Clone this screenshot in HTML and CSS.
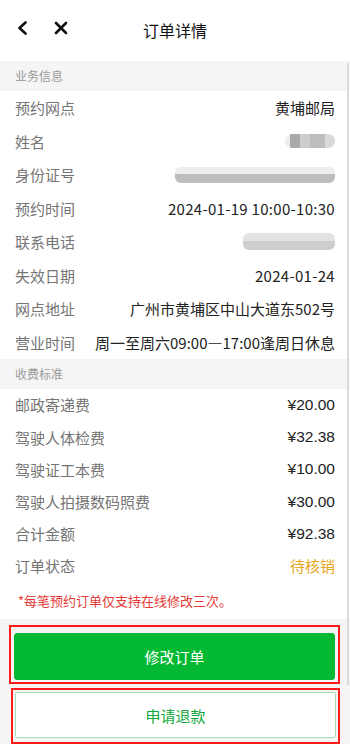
FILE: index.html
```html
<!DOCTYPE html>
<html lang="zh">
<head>
<meta charset="utf-8">
<title>订单详情</title>
<link rel="stylesheet" href="styles.css">
</head>
<body>
<div class="page">
  <header class="nav">
    <div class="nav-icons">
      <svg class="icon" width="14" height="14" viewBox="0 0 14 14"><path d="M9.5 1.5 L3.5 7 L9.5 12.5" fill="none" stroke="#111" stroke-width="2.6" stroke-linecap="round" stroke-linejoin="round"/></svg>
      <svg class="icon" width="14" height="14" viewBox="0 0 14 14"><path d="M2 2 L12 12 M12 2 L2 12" fill="none" stroke="#111" stroke-width="2.6" stroke-linecap="round"/></svg>
    </div>
    <div class="nav-title">订单详情</div>
  </header>

  <div class="sec-head">业务信息</div>
  <div class="list">
    <div class="row"><span class="label">预约网点</span><span class="value">黄埔邮局</span></div>
    <div class="row"><span class="label">姓名</span><span class="blur blur-name"></span></div>
    <div class="row"><span class="label">身份证号</span><span class="blur blur-id"></span></div>
    <div class="row"><span class="label">预约时间</span><span class="value latin">2024-01-19 10:00-10:30</span></div>
    <div class="row"><span class="label">联系电话</span><span class="blur blur-phone"></span></div>
    <div class="row"><span class="label">失效日期</span><span class="value latin">2024-01-24</span></div>
    <div class="row"><span class="label">网点地址</span><span class="value">广州市黄埔区中山大道东502号</span></div>
    <div class="row"><span class="label">营业时间</span><span class="value">周一至周六09:00—17:00逢周日休息</span></div>
  </div>

  <div class="sec-head">收费标准</div>
  <div class="list fees">
    <div class="row"><span class="label">邮政寄递费</span><span class="value money">¥20.00</span></div>
    <div class="row"><span class="label">驾驶人体检费</span><span class="value money">¥32.38</span></div>
    <div class="row"><span class="label">驾驶证工本费</span><span class="value money">¥10.00</span></div>
    <div class="row"><span class="label">驾驶人拍摄数码照费</span><span class="value money">¥30.00</span></div>
    <div class="row"><span class="label">合计金额</span><span class="value money">¥92.38</span></div>
    <div class="row"><span class="label">订单状态</span><span class="value status">待核销</span></div>
  </div>

  <div class="note">*每笔预约订单仅支持在线修改三次。</div>

  <div class="actions">
    <div class="mark mark-1"><button class="btn btn-primary">修改订单</button></div>
    <div class="mark mark-2"><button class="btn btn-outline">申请退款</button></div>
  </div>
  <div class="scrollbar"></div>
</div>
</body>
</html>
```
FILE: styles.css
```css
* { box-sizing: border-box; }
html, body { margin: 0; padding: 0; }
body {
  width: 350px;
  height: 744px;
  overflow: hidden;
  font-family: "Noto Sans CJK SC", "Noto Sans", sans-serif;
  background: #f5f5f5;
}
.page {
  position: relative;
  height: 744px;
  display: flex;
  flex-direction: column;
}
.nav {
  position: relative;
  height: 63px;
  background: #fff;
  display: flex;
  align-items: center;
}
.nav-icons {
  display: flex;
  gap: 24px;
  padding-left: 16px;
  margin-top: -4px;
}
.icon { display: block; }
.nav-title {
  position: absolute;
  left: 0;
  right: 0;
  top: 19px;
  text-align: center;
  font-size: 16px;
  line-height: 22px;
  color: #111;
}
.sec-head {
  height: 30px;
  line-height: 30px;
  padding-left: 15px;
  font-size: 12px;
  color: #9a9a9a;
  background: #f5f5f5;
}
.list {
  background: #fff;
  padding: 0 15px;
}
.row {
  height: 33.5px;
  display: flex;
  align-items: center;
  justify-content: space-between;
  font-size: 15px;
}
.fees .row { height: 32.2px; }
.label { color: #757575; }
.value { color: #222; }
.latin { letter-spacing: 0.3px; }
.money { font-family: "Liberation Sans", Arial, sans-serif; font-size: 15.5px; color: #222; }
.status { color: #e8a61c; }
.blur {
  display: block;
  height: 14px;
  border-radius: 7px;
}
.blur-name { width: 50px; background: linear-gradient(90deg, #ededed 0 10%, #a9a9a9 10% 30%, #cdcdcd 30% 50%, #bdbdbd 50% 80%, #d9d9d9 80%); }
.blur-id { width: 160px; height: 16px; border-radius: 6px; background: linear-gradient(180deg, #ededed 0 45%, #bdbdbd 45%); }
.blur-phone { width: 92px; height: 17px; border-radius: 6px; background: linear-gradient(180deg, #e3e3e3 0 50%, #cdcdcd 50%); }
.note {
  background: #fff;
  color: #e53935;
  font-size: 13px;
  line-height: 20px;
  padding: 9px 18px 8px;
}
.actions {
  flex: 1;
  background: #f5f5f5;
  padding: 6px 10px 0 9px;
  display: flex;
  flex-direction: column;
  gap: 4px;
}
.mark {
  border: 2px solid #ff1a1a;
}
.mark-1 { padding: 6px 3px 2px 3px; height: 59px; }
.mark-2 { padding: 2px 2px 4px 2px; margin-left: 2px; height: 56px; }
.btn {
  display: block;
  width: 100%;
  height: 100%;
  border-radius: 3px;
  font-family: inherit;
  font-size: 15px;
  cursor: pointer;
}
.btn-primary {
  background: #03b833;
  color: #fff;
  border: 1px solid #03b833;
}
.btn-outline {
  background: #fff;
  color: #11a83a;
  border: 1px solid #a6dcb4;
  border-radius: 2px;
}
.scrollbar {
  position: absolute;
  right: 1px;
  top: 63px;
  width: 2px;
  height: 622px;
  background: #dcdcdc;
}
```
